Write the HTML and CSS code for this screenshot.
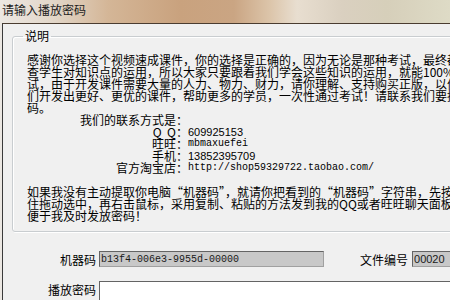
FILE: index.html
```html
<!DOCTYPE html>
<html lang="zh-CN">
<head>
    <meta charset="UTF-8">
    <title>请输入播放密码</title>
    <link rel="stylesheet" href="styles.css">
</head>
<body>
    <div class="desk">
        <div class="titlebar">请输入播放密码</div>

        <div class="client">
            <!-- 说明 -->
            <fieldset class="group">
                <legend>说明</legend>
                <p class="lines">感谢你选择这个视频速成课件，你的选择是正确的，因为无论是那种考试，最终都是考<br>查学生对知识点的运用，所以大家只要跟着我们学会这些知识的运用，就能100%通过考<br>试，由于开发课件需要大量的人力、物力、财力，请你理解、支持购买正版，以便我<br>们开发出更好、更优的课件，帮助更多的学员，一次性通过考试！请联系我们要播放密<br>码。</p>

                <div class="contact">
                    <span class="label">我们的联系方式是：</span><span></span>
                    <span class="label">Q&nbsp;&nbsp;Q：</span><span class="num">609925153</span>
                    <span class="label">旺旺：</span><span class="mono">mbmaxuefei</span>
                    <span class="label">手机：</span><span class="num">13852395709</span>
                    <span class="label">官方淘宝店：</span><span class="mono">http://shop59329722.taobao.com/</span>
                </div>

                <p class="lines gap">如果我没有主动提取你电脑“机器码”，就请你把看到的“机器码”字符串，先按<br>住拖动选中，再右击鼠标，采用复制、粘贴的方法发到我的QQ或者旺旺聊天面板上，<br>便于我及时发放密码！</p>
            </fieldset>

            <!-- 机器码 / 文件编号 -->
            <div class="field-row first">
                <label class="field-label">机器码</label>
                <input class="box code" type="text" value="b13f4-006e3-9955d-00000" readonly>
                <label class="field-label file-label">文件编号</label>
                <input class="box file" type="text" value="00020" readonly>
            </div>

            <!-- 播放密码 -->
            <div class="field-row">
                <label class="field-label">播放密码</label>
                <input class="box pass" type="text">
            </div>
        </div>
    </div>
</body>
</html>
```

FILE: styles.css
```css
:root {
    --cjk: "Noto Sans CJK SC", "Liberation Sans", sans-serif;
    --frame-dark: #4a3c30;
    --face: #f0f0f0;
}
body {
    margin: 0;
    background: #e6ddd2;
    font-family: var(--cjk);
    overflow: hidden;
}
.desk {
    width: 450px;
    height: 300px;
    overflow: hidden;
    background: linear-gradient(90deg, #ece8e3 0%, #e2d6c8 12%, #d4b697 24%, #c9a27e 40%, #caa583 52%, #dcc5aa 60%, #e8ded0 66%, #dad0c0 76%, #d6cfba 86%, #dedbc6 100%);
}
.titlebar {
    height: 23px;
    line-height: 19px;
    padding-left: 2px;
    font-size: 12px;
    color: #1c1c1c;
}
.client {
    width: 560px;
    height: 290px;
    margin-left: 2px;
    border-top: 1px solid var(--frame-dark);
    border-left: 1px solid #3a3a3a;
    background: var(--face);
}
.group {
    width: 480px;
    margin: 5px 0 0 9px;
    padding: 11px 0 9px 10px;
    border: 1px solid #c9cdd0;
    border-radius: 3px;
    box-shadow: inset 1px 1px 0 #fff, 1px 1px 0 #fff;
}
.group legend {
    padding: 0 2px;
    font-size: 12px;
    line-height: 14px;
    color: #000;
}
.lines {
    margin: 0 0 0 4px;
    font-size: 12px;
    line-height: 12px;
    white-space: nowrap;
    color: #000;
}
.lines.gap {
    margin-top: 12px;
}
.contact {
    display: grid;
    grid-template-columns: 161px auto;
    margin-left: 4px;
    font-size: 12px;
    line-height: 12px;
}
.contact .label {
    text-align: right;
}
.num {
    font-family: "Liberation Sans", sans-serif;
    font-size: 11px;
}
.mono {
    font-family: "Liberation Mono", monospace;
    font-size: 10px;
}
.field-row {
    display: flex;
    align-items: center;
    height: 16px;
    margin-top: 14px;
}
.field-row.first {
    margin-top: 19px;
}
.field-label {
    width: 93px;
    padding-right: 3px;
    text-align: right;
    font-size: 12px;
    color: #000;
}
.file-label {
    width: auto;
    margin-left: 36px;
    padding-right: 4px;
}
.box {
    box-sizing: border-box;
    height: 16px;
    margin: 0;
    padding: 0 1px;
    border: 1px solid #a0a0a0;
    border-top-color: #646464;
    border-left-color: #646464;
    border-radius: 0;
    background: #c8c8c8;
    color: #1a1a1a;
    outline: none;
}
.code {
    width: 225px;
    font-family: "Liberation Mono", monospace;
    font-size: 10px;
}
.file {
    width: 60px;
    font-family: "Liberation Sans", sans-serif;
    font-size: 11px;
}
.pass {
    width: 360px;
    height: 30px;
    align-self: flex-start;
    background: #fff;
}
```
